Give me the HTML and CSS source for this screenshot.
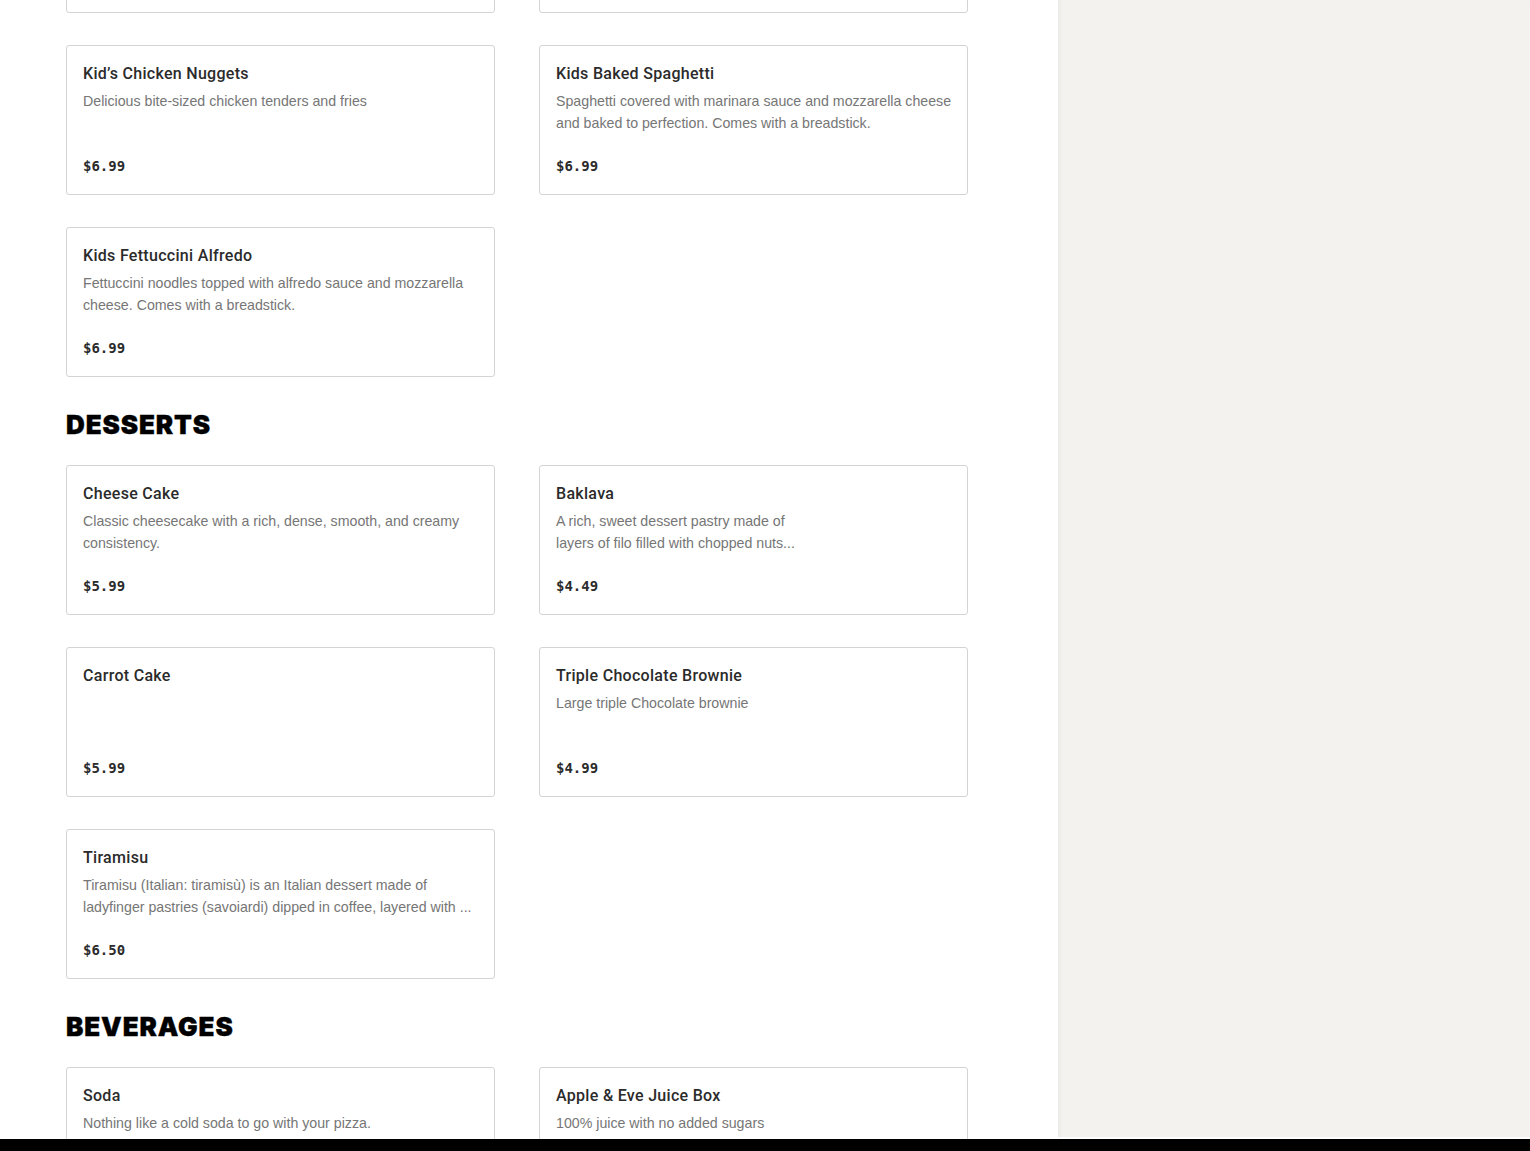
FILE: index.html
```html
<!DOCTYPE html>
<html lang="en">
<head>
<meta charset="utf-8">
<title>Menu</title>
<link rel="stylesheet" href="styles.css">
</head>
<body>
<div class="page">
  <main class="menu">
    <section class="section">
      <div class="grid">
        <div class="card"><h3 class="title">Kid’s Cheese Pizza</h3><p class="desc">Personal cheese pizza</p><div class="price">$6.99</div></div>
        <div class="card"><h3 class="title">Kid’s Pepperoni Pizza</h3><p class="desc">Personal pepperoni pizza</p><div class="price">$6.99</div></div>
        <div class="card"><h3 class="title">Kid’s Chicken Nuggets</h3><p class="desc">Delicious bite-sized chicken tenders and fries</p><div class="price">$6.99</div></div>
        <div class="card"><h3 class="title">Kids Baked Spaghetti</h3><p class="desc">Spaghetti covered with marinara sauce and mozzarella cheese<br>and baked to perfection. Comes with a breadstick.</p><div class="price">$6.99</div></div>
        <div class="card"><h3 class="title">Kids Fettuccini Alfredo</h3><p class="desc">Fettuccini noodles topped with alfredo sauce and mozzarella<br>cheese. Comes with a breadstick.</p><div class="price">$6.99</div></div>
      </div>
    </section>
    <section class="section">
      <h2 class="heading">DESSERTS</h2>
      <div class="grid">
        <div class="card"><h3 class="title">Cheese Cake</h3><p class="desc">Classic cheesecake with a rich, dense, smooth, and creamy<br>consistency.</p><div class="price">$5.99</div></div>
        <div class="card"><h3 class="title">Baklava</h3><p class="desc">A rich, sweet dessert pastry made of<br>layers of filo filled with chopped nuts...</p><div class="price">$4.49</div></div>
        <div class="card"><h3 class="title">Carrot Cake</h3><p class="desc"></p><div class="price">$5.99</div></div>
        <div class="card"><h3 class="title">Triple Chocolate Brownie</h3><p class="desc">Large triple Chocolate brownie</p><div class="price">$4.99</div></div>
        <div class="card"><h3 class="title">Tiramisu</h3><p class="desc">Tiramisu (Italian: tiramisù) is an Italian dessert made of<br>ladyfinger pastries (savoiardi) dipped in coffee, layered with ...</p><div class="price">$6.50</div></div>
      </div>
    </section>
    <section class="section">
      <h2 class="heading">BEVERAGES</h2>
      <div class="grid">
        <div class="card"><h3 class="title">Soda</h3><p class="desc">Nothing like a cold soda to go with your pizza.</p><div class="price">$2.49</div></div>
        <div class="card"><h3 class="title">Apple &amp; Eve Juice Box</h3><p class="desc">100% juice with no added sugars</p><div class="price">$1.99</div></div>
      </div>
    </section>
  </main>
  <aside class="side"></aside>
</div>
<div class="bottom-bar"></div>
</body>
</html>
```

FILE: styles.css
```css
html, body {
  margin: 0;
  padding: 0;
  background: #ffffff;
}
body {
  height: 1151px;
  overflow: hidden;
  font-family: "Liberation Sans", Arial, sans-serif;
}
.page {
  display: flex;
  height: 1151px;
}
.menu {
  width: 1058px;
  flex: none;
  box-sizing: border-box;
  padding-left: 66px;
  margin-top: -137px;
}
.side {
  flex: 1;
  background: #f3f2ef;
  box-shadow: inset 4px 0 4px -2px rgba(0,0,0,0.035);
  margin-bottom: 14px;
}
.section {
  margin-bottom: 32px;
}
.heading {
  margin: 0 0 24px 0;
  font-family: Inter, "Liberation Sans", sans-serif;
  font-weight: 900;
  font-size: 26px;
  line-height: 32px;
  color: #000;
  letter-spacing: 0.9px;
  -webkit-text-stroke: 0.4px #000;
}
.grid {
  display: grid;
  grid-template-columns: 429px 429px;
  column-gap: 44px;
  row-gap: 32px;
}
.card {
  box-sizing: border-box;
  height: 150px;
  border: 1px solid #d4d4d4;
  border-radius: 3px;
  padding: 16px 16px 16px 16px;
  display: flex;
  flex-direction: column;
}
.title {
  margin: 0;
  font-family: Roboto, "Liberation Sans", sans-serif;
  font-size: 16px;
  line-height: 24px;
  font-weight: 500;
  color: #2b2b2b;
  letter-spacing: 0.3px;
}
.desc {
  margin: 4px 0 0 0;
  font-size: 14.2px;
  line-height: 22px;
  color: #767676;
  white-space: nowrap;
}
.price {
  margin-top: auto;
  font-family: "DejaVu Sans Mono", "Liberation Mono", monospace;
  font-weight: bold;
  font-size: 14px;
  line-height: 24px;
  color: #2b2b2b;
}
.bottom-bar {
  position: fixed;
  left: 0;
  right: 0;
  bottom: 0;
  height: 12px;
  background: #000;
}
```
